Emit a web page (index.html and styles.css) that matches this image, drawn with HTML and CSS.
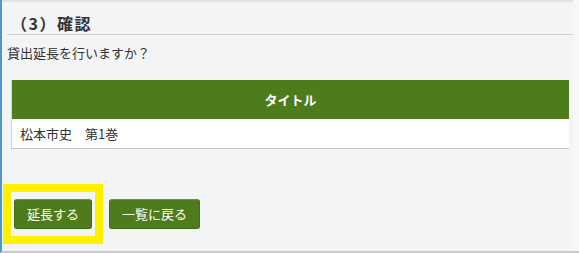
FILE: index.html
```html
<!DOCTYPE html>
<html lang="ja">
<head>
<meta charset="utf-8">
<title>確認</title>
<link rel="stylesheet" href="styles.css">
</head>
<body>
<div class="page">
  <div class="main">
    <h2 class="heading">（3）確認</h2>
    <p class="lead">貸出延長を行いますか？</p>
    <table class="list">
      <thead>
        <tr><th>タイトル</th></tr>
      </thead>
      <tbody>
        <tr><td>松本市史　第1巻</td></tr>
      </tbody>
    </table>
    <div class="actions">
      <span class="highlight"><button class="btn btn-extend" type="button">延長する</button></span>
      <button class="btn btn-back" type="button">一覧に戻る</button>
    </div>
  </div>
</div>
</body>
</html>
```

FILE: styles.css
```css
html, body {
  margin: 0;
  padding: 0;
}
body {
  background: #f6f7f9;
  font-family: "Noto Sans CJK JP", "Noto Sans", sans-serif;
  color: #333;
  font-size: 13px;
  width: 579px;
  height: 253px;
  overflow: hidden;
}
.page {
  height: 251px;
  border-left: 2px solid #4c97cc;
  border-bottom: 2px solid #c9c9c9;
  display: flex;
}
.main {
  width: 571px;
  height: 251px;
  background: linear-gradient(#d9dadd, #eceef0 2px, #f3f4f6 4px) no-repeat;
  background-color: #f3f4f6;
}
.heading {
  margin: 0 0 0 5px;
  padding: 12px 0 0 4px;
  font-size: 16px;
  line-height: 22px;
  font-weight: bold;
  letter-spacing: 1.5px;
  color: #333;
  border-bottom: 1px solid #cfd0d2;
}
.lead {
  margin: 8px 0 0 5px;
  line-height: 20px;
  font-size: 13px;
}
.list {
  margin: 17px 0 0 9px;
  width: 558px;
  border-collapse: collapse;
  border-left: 1px solid #d2d2d2;
  border-bottom: 1px solid #c6c6c6;
  background: #fff;
}
.list th {
  height: 39px;
  padding: 0;
  background: #4e7b1c;
  color: #fff;
  font-size: 13px;
  font-weight: bold;
  text-align: center;
  line-height: 20px;
}
.list td {
  height: 29px;
  padding: 0 0 0 8px;
  font-size: 13px;
  line-height: 20px;
  text-align: left;
}
.actions {
  margin: 35px 0 0 1px;
  display: flex;
  align-items: center;
  gap: 6px;
}
.highlight {
  display: flex;
  border: 8px solid #fff000;
  padding: 7px 3px;
}
.btn {
  height: 30px;
  margin: 0;
  padding: 0;
  border: 1px solid #456d18;
  border-top-color: #6b8f45;
  border-radius: 3px;
  background: #4e7b1c;
  color: #fff;
  font-family: "Noto Sans CJK JP", "Noto Sans", sans-serif;
  font-size: 13px;
  line-height: 20px;
}
.btn-extend {
  width: 78px;
}
.btn-back {
  width: 91px;
}
```
